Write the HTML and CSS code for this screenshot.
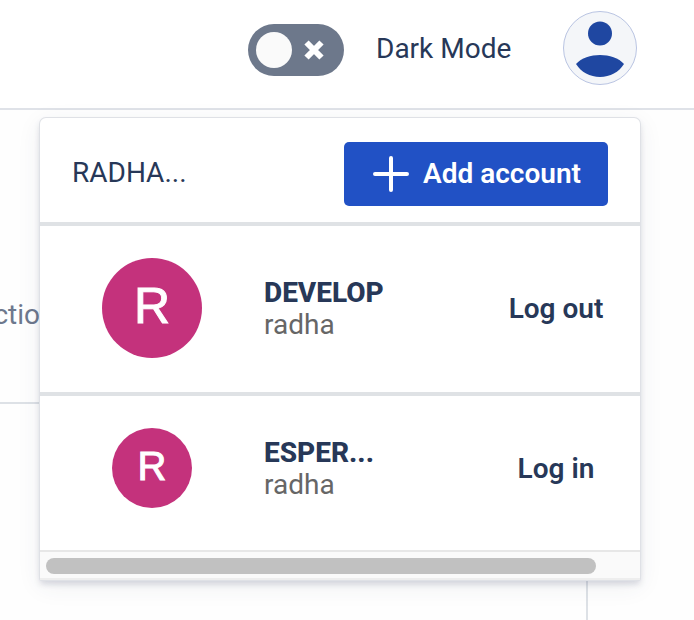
FILE: index.html
```html
<!DOCTYPE html>
<html lang="en">
<head>
<meta charset="utf-8">
<title>Accounts</title>
<link rel="stylesheet" href="styles.css">
</head>
<body>
<header class="topbar">
  <input class="switch-input" type="checkbox" id="dark-mode">
  <label class="switch" for="dark-mode">
    <span class="switch-knob"></span>
    <svg class="switch-cross" viewBox="0 0 20 20" aria-hidden="true"><path d="M2.5 2.5 17.5 17.5M17.5 2.5 2.5 17.5" stroke="#fff" stroke-width="6"/></svg>
  </label>
  <label class="switch-label" for="dark-mode">Dark Mode</label>
  <button class="profile" type="button" aria-label="Accounts">
    <svg viewBox="0 0 74 74" aria-hidden="true">
      <circle cx="37" cy="37" r="36.5" fill="#f4f6f9" stroke="#b9c4e2"/>
      <circle cx="37" cy="22.5" r="12" fill="#1f47a1"/>
      <path d="M13 53C18 47 28 44 37 44S56 47 61 53C56 61 47 66 37 66S18 61 13 53Z" fill="#1f47a1"/>
    </svg>
  </button>
</header>
<main class="page">
  <p class="tab">ctio</p>
  <section class="content"></section>
</main>
<div class="menu">
  <div class="menu-head">
    <span class="menu-title">RADHA...</span>
    <button class="add" type="button">
      <svg class="add-icon" viewBox="0 0 36 36" aria-hidden="true"><path d="M18 2V34M2 18H34" stroke="#fff" stroke-width="4" stroke-linecap="round"/></svg>
      Add account
    </button>
  </div>
  <div class="account account-current">
    <span class="avatar avatar-large">R</span>
    <div class="who"><strong class="org">DEVELOP</strong><span class="user">radha</span></div>
    <button class="action" type="button">Log out</button>
  </div>
  <div class="account">
    <span class="avatar">R</span>
    <div class="who"><strong class="org">ESPER...</strong><span class="user">radha</span></div>
    <button class="action" type="button">Log in</button>
  </div>
  <div class="scroll-track"><div class="scroll-thumb"></div></div>
</div>
</body>
</html>
```
FILE: styles.css
```css
* { box-sizing: border-box; }

body {
  margin: 0;
  min-height: 100vh;
  display: flex;
  flex-direction: column;
  position: relative;
  overflow: hidden;
  background: #fefefe;
  color: #273858;
  font: 28px/32px Roboto, "Liberation Sans", sans-serif;
}

button {
  padding: 0;
  border: 0;
  background: none;
  color: inherit;
  font: inherit;
  cursor: pointer;
}

.topbar {
  height: 110px;
  padding: 0 57px 8px 0;
  display: grid;
  grid-template-columns: 96px 155px 74px;
  gap: 32px;
  justify-content: end;
  align-items: center;
  background: #fff;
  border-bottom: 2px solid #dfe2e8;
}

.switch-input {
  position: absolute;
  opacity: 0;
}

.switch {
  height: 52px;
  padding: 0 20px 0 8px;
  display: flex;
  align-items: center;
  justify-content: space-between;
  border-radius: 26px;
  background: #6d788b;
}

.switch-label {
  padding-bottom: 2px;
}

.switch-knob {
  width: 36px;
  height: 36px;
  border-radius: 50%;
  background: #fafafa;
}

.switch-cross {
  width: 20px;
  height: 20px;
}

.profile {
  padding-bottom: 4px;
}

.profile svg {
  display: block;
  width: 74px;
  height: 74px;
}

.page {
  flex: 1;
  display: flex;
  flex-direction: column;
}

.tab {
  width: 40px;
  margin: 0;
  padding: 189px 0 71px;
  display: flex;
  justify-content: flex-end;
  color: #6d788d;
}

.content {
  flex: 1;
  margin-right: 106px;
  border-top: 2px solid #dde1e6;
  border-right: 2px solid #dde1e6;
}

.menu {
  position: absolute;
  top: 118px;
  left: 40px;
  right: 54px;
  background: #fff;
  border-radius: 6px 6px 2px 2px;
  box-shadow: 0 0 0 1px #dfe1e6, 0 4px 6px rgba(50, 55, 95, 0.18), 0 6px 24px rgba(50, 60, 90, 0.08);
}

.menu-head {
  height: 108px;
  padding: 8px 32px 0;
  display: flex;
  align-items: center;
  justify-content: space-between;
  border-bottom: 4px solid #dfe2e5;
}

.menu-title {
  padding-bottom: 2px;
}

.add {
  width: 264px;
  height: 64px;
  padding-left: 2px;
  display: flex;
  align-items: center;
  justify-content: center;
  gap: 14px;
  border-radius: 5px;
  background: #2151c5;
  color: #fff;
  font-weight: 600;
}

.add-icon {
  width: 36px;
  height: 36px;
}

.account {
  height: 154px;
  padding: 0 12px 10px 0;
  display: grid;
  grid-template-columns: 224px 1fr 144px;
  align-items: center;
}

.account-current {
  height: 170px;
  padding-bottom: 2px;
  border-bottom: 4px solid #dfe2e5;
}

.avatar {
  width: 80px;
  height: 80px;
  padding-bottom: 4px;
  justify-self: center;
  display: flex;
  align-items: center;
  justify-content: center;
  border-radius: 50%;
  background: #c4327c;
  color: #fff;
  font: 40px/40px "Liberation Sans", sans-serif;
  -webkit-text-stroke: 1px #fff;
}

.avatar-large {
  width: 100px;
  height: 100px;
  font-size: 50px;
}

.who {
  padding-top: 2px;
  display: flex;
  flex-direction: column;
}

.org {
  font-weight: 800;
}

.user {
  color: #666;
}

.action {
  padding-top: 2px;
  font-weight: 600;
}

.scroll-track {
  height: 30px;
  padding: 6px 44px 4px 6px;
  border-top: 2px solid #e7e7e7;
  border-bottom: 2px solid #eee;
  background: #fafafa;
}

.scroll-thumb {
  height: 16px;
  border-radius: 8px;
  background: #c1c1c1;
}
```
